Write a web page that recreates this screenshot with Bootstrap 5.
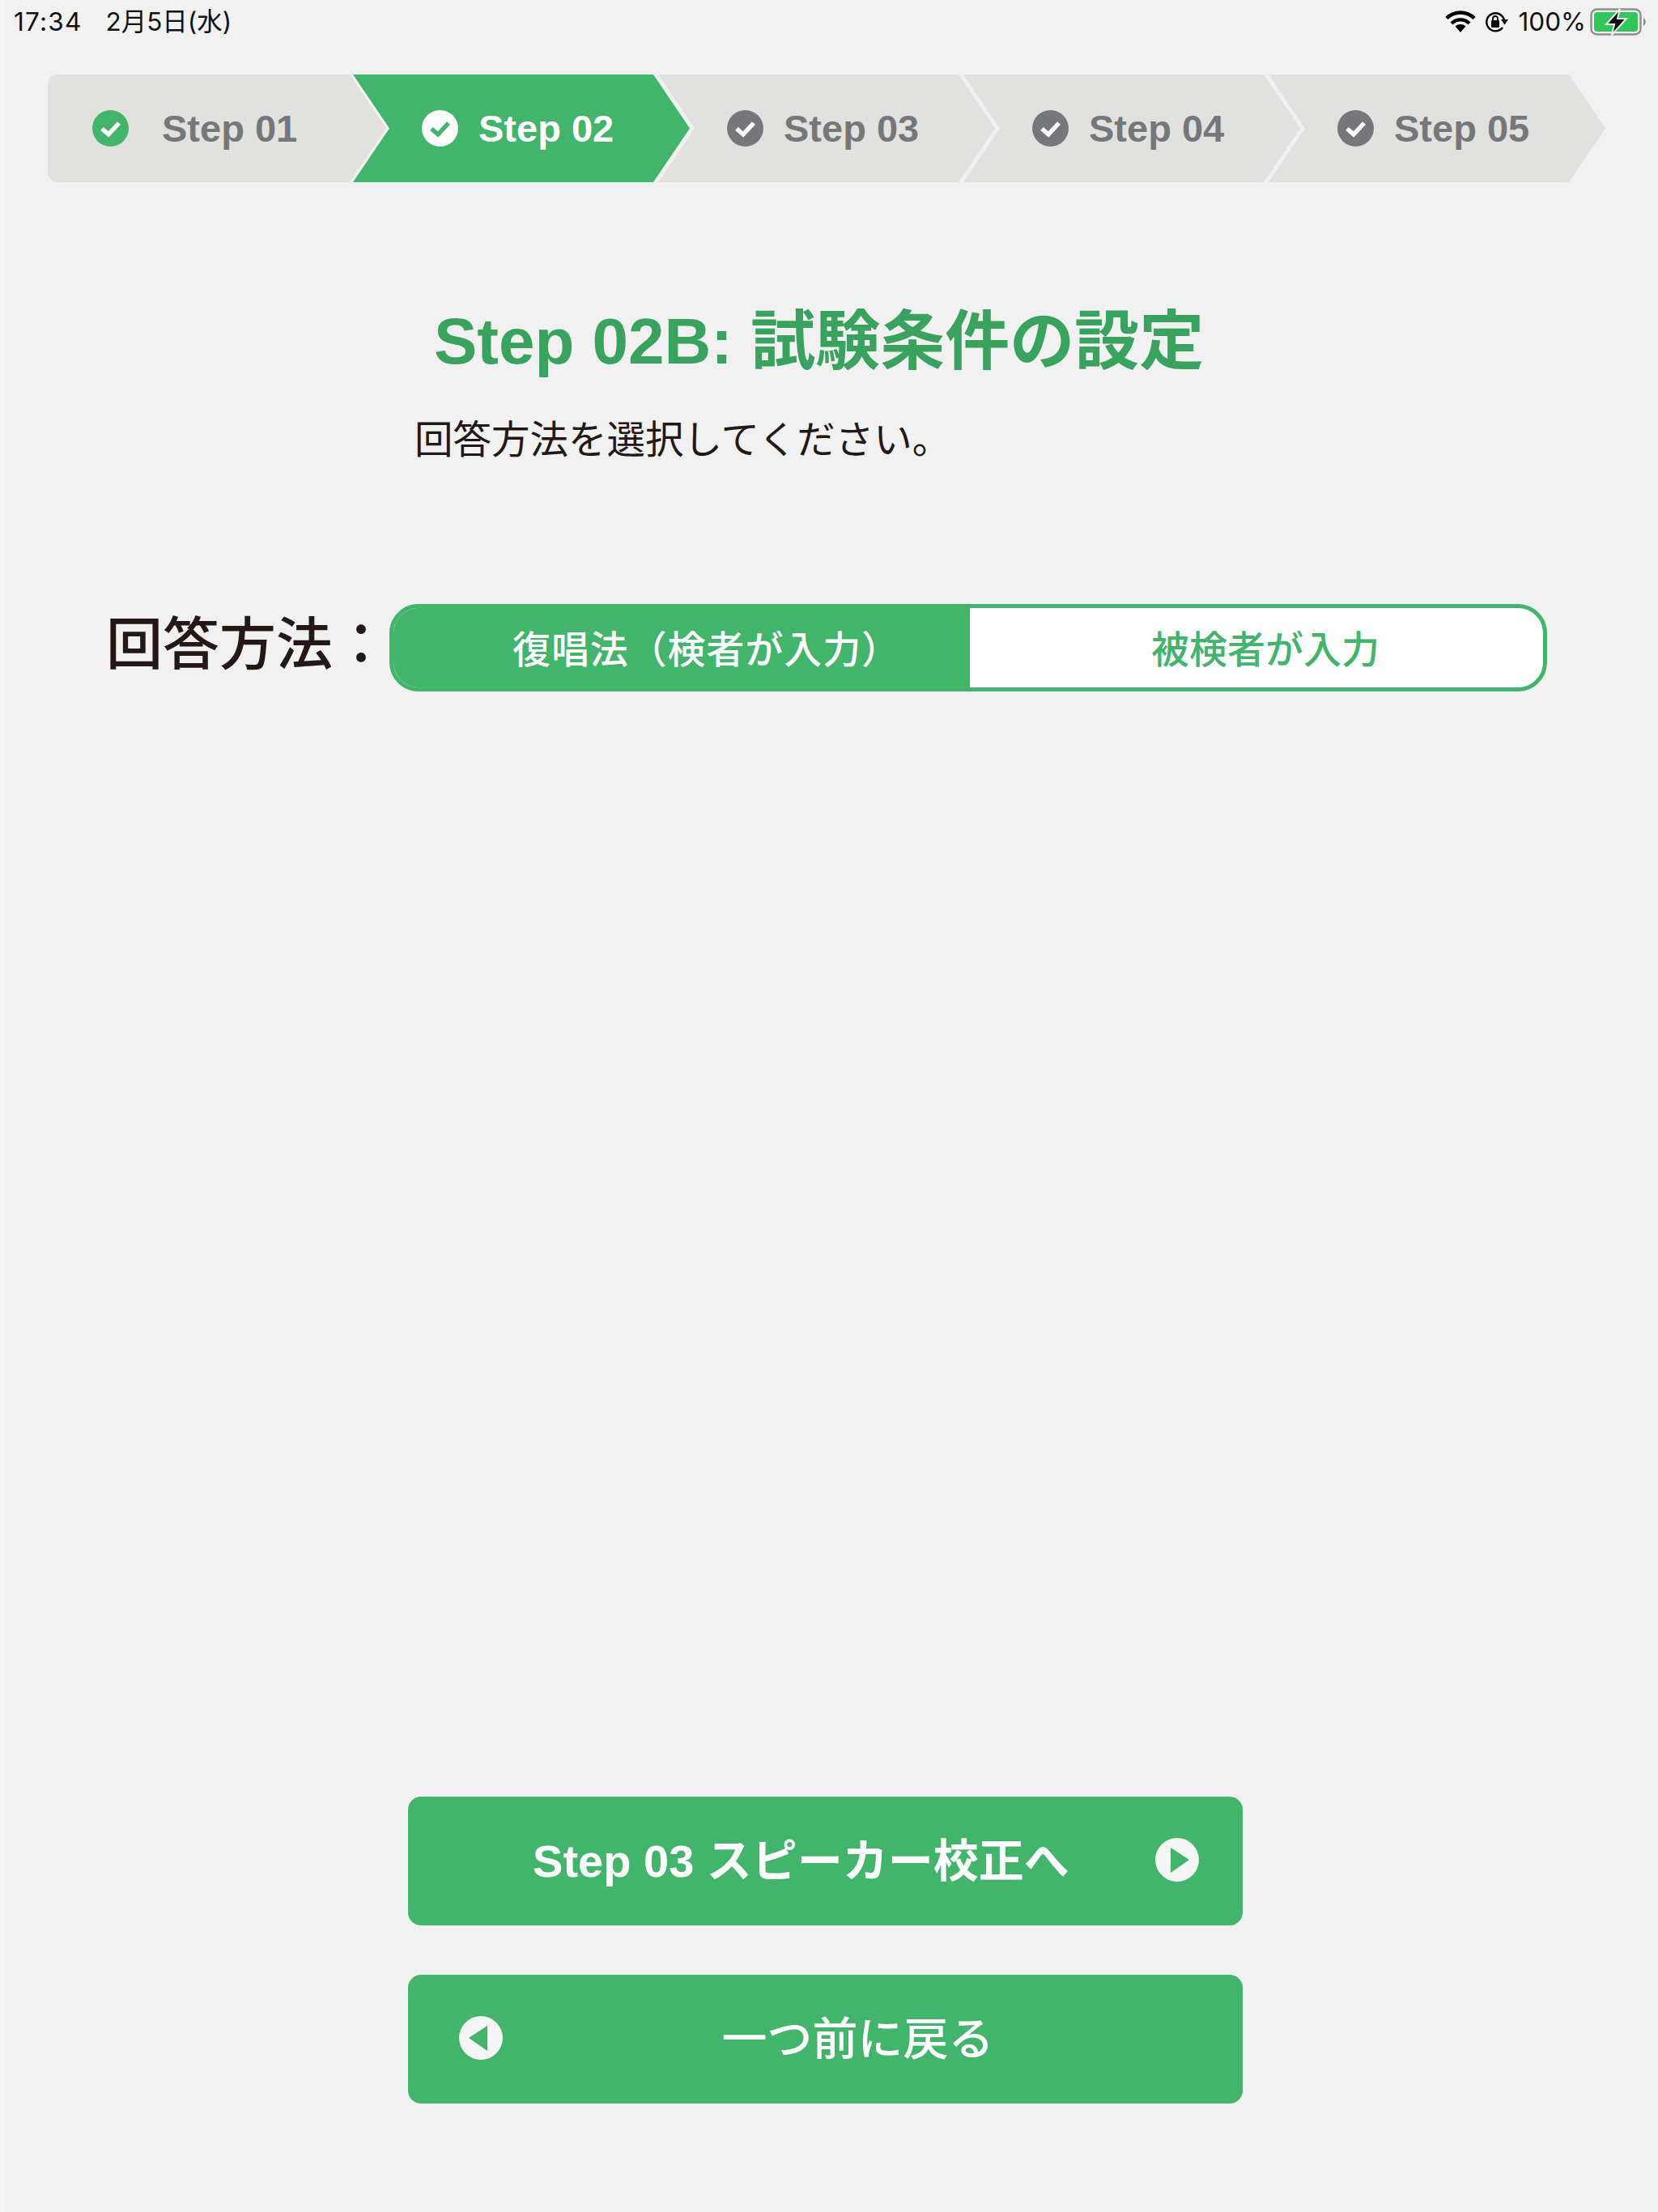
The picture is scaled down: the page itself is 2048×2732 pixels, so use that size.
<!DOCTYPE html>
<html lang="ja">
<head>
<meta charset="utf-8">
<title>Step 02B</title>
<link rel="stylesheet" href="https://cdn.jsdelivr.net/npm/bootstrap@5.3.0/dist/css/bootstrap.min.css">
<style>
:root{--grn:#42b46c;--grey:#e1e1df;--ink:#231815;--cjk:"Liberation Sans","Noto Sans CJK JP",sans-serif}
html,body{margin:0;background:#f1f1f1}
body{font-family:var(--cjk);color:var(--ink)}
.app-page{height:2732px;border-left:5px solid #f7f7f7;overflow:hidden}
.status-strip{height:54px;padding:0 14px 0 12px;font-family:"Inter","Noto Sans CJK JP",sans-serif;font-size:31.5px;color:#111;line-height:54px}
.status-time{letter-spacing:1.2px}
.status-date{margin-left:29px}
.status-lock{margin-left:11px}
.status-pct{margin:0 5px 0 12px}
.step-track{margin:38px 0 0 54px;height:133px}
.step-tab{width:416px;height:133px;margin-right:-39px;flex:none;background:var(--grey);color:#76777a;font-size:47px;font-weight:700;
 clip-path:polygon(0 0,371px 0,416px 50%,371px 100%,0 100%,45px 50%);padding-left:85px;gap:25px}
.step-tab span{padding-top:2px}
.step-tab.step-first{clip-path:polygon(0 0,373px 0,418px 50%,373px 100%,0 100%);width:418px;margin-right:-41px;padding-left:55px;gap:41px;border-radius:12px 0 0 12px}
.step-tab.step-on{background:var(--grn);color:#fff}
.step-ic{width:45px;height:45px;flex:none;display:block}
.page-title{font-size:80px;font-weight:700;color:#3aa25f;line-height:1;margin:157px 0 0 531px;white-space:nowrap}
.page-lead{font-size:47.5px;line-height:1;margin:58px 0 0 507px;white-space:nowrap}
.answer-row{margin:178px 0 0 126px;height:108px}
.answer-label{font-family:"Noto Sans CJK JP",sans-serif;font-size:70px;font-weight:500;width:350px;line-height:1;flex:none;padding-bottom:18px}
.seg-box{width:1430px;height:108px;border:5px solid var(--grn);border-radius:36px;overflow:hidden;background:#fff;font-family:"Noto Sans CJK JP",sans-serif;font-size:47px;font-weight:500}
.seg-on{width:712px;background:var(--grn);color:#fff;padding-left:147px;letter-spacing:.9px}
.seg-off{color:var(--grn);padding-left:22px}
.foot-stack{margin-top:auto;padding-bottom:134px;gap:61px;align-items:flex-start;margin-left:499px}
.foot-btn{width:1031px;height:159px;background:var(--grn);border:0;border-radius:16px;color:#fff;font-size:56px;font-weight:700;position:relative;padding:0}
.foot-btn:hover{background:var(--grn);color:#fff}
.foot-ic{width:54px;height:54px;position:absolute;top:51px}
.ic-next{right:54px}
.ic-prev{left:63px}
.foot-label{font-family:var(--cjk);white-space:nowrap}
.foot-back{font-family:"Noto Sans CJK JP",sans-serif;font-weight:500;font-size:56px;padding-left:80px;padding-bottom:5px}
.foot-next{padding-right:60px}
</style>
</head>
<body>
<div class="app-page d-flex flex-column">
  <div class="status-strip d-flex align-items-center">
    <span class="status-time">17:34</span><span class="status-date">2月5日(水)</span>
    <span class="ms-auto d-flex align-items-center">
      <svg width="38" height="28" viewBox="0 0 38 28"><g fill="none" stroke="#000" stroke-width="4.4"><path d="M2 9.5a24 24 0 0 1 34 0"/><path d="M8 16a15.5 15.5 0 0 1 22 0"/></g><path d="M12.6 19.5a9.5 9.5 0 0 1 12.8 0L19 27z"/></svg>
      <svg class="status-lock" width="30" height="26" viewBox="0 0 30 26"><path d="M24 11A11 11 0 1 0 22 20" fill="none" stroke="#000" stroke-width="2.4"/><path d="M20 10h9l-4.5 6.5z"/><rect x="8" y="11" width="10" height="9" rx="1.2"/><path d="M10 11.5V9a3 3 0 0 1 6 0v2.5" fill="none" stroke="#000" stroke-width="1.8"/></svg>
      <span class="status-pct">100%</span>
      <svg width="70" height="34" viewBox="0 0 70 34"><rect x="1.5" y="1.5" width="61" height="31" rx="7" fill="none" stroke="#8e8e8e" stroke-width="2.4"/><rect x="5" y="5" width="54" height="24" rx="4" fill="#30c75a"/><path d="M66 12a6 6 0 0 1 0 10z" fill="#8e8e8e"/><path d="M37 1L20 20h10l-3 13 18-20H34z" fill="#111" stroke="#f1f1f1" stroke-width="2"/></svg>
    </span>
  </div>

  <div class="step-track d-flex">
    <div class="step-tab step-first d-flex align-items-center">
      <svg class="step-ic" viewBox="0 0 45 45"><circle cx="22.5" cy="22.5" r="22.5" fill="#42b46c"/><path d="M12 23l8 7 13-14" fill="none" stroke="#fff" stroke-width="5.5"/></svg><span>Step 01</span>
    </div>
    <div class="step-tab step-on d-flex align-items-center">
      <svg class="step-ic" viewBox="0 0 45 45"><circle cx="22.5" cy="22.5" r="22.5" fill="#fff"/><path d="M12 23l8 7 13-14" fill="none" stroke="#42b46c" stroke-width="5.5"/></svg><span>Step 02</span>
    </div>
    <div class="step-tab d-flex align-items-center">
      <svg class="step-ic" viewBox="0 0 45 45"><circle cx="22.5" cy="22.5" r="22.5" fill="#76777a"/><path d="M12 23l8 7 13-14" fill="none" stroke="#fff" stroke-width="5.5"/></svg><span>Step 03</span>
    </div>
    <div class="step-tab d-flex align-items-center">
      <svg class="step-ic" viewBox="0 0 45 45"><circle cx="22.5" cy="22.5" r="22.5" fill="#76777a"/><path d="M12 23l8 7 13-14" fill="none" stroke="#fff" stroke-width="5.5"/></svg><span>Step 04</span>
    </div>
    <div class="step-tab d-flex align-items-center">
      <svg class="step-ic" viewBox="0 0 45 45"><circle cx="22.5" cy="22.5" r="22.5" fill="#76777a"/><path d="M12 23l8 7 13-14" fill="none" stroke="#fff" stroke-width="5.5"/></svg><span>Step 05</span>
    </div>
  </div>

  <h1 class="page-title">Step 02B: 試験条件の設定</h1>
  <p class="page-lead mb-0">回答方法を選択してください。</p>

  <div class="answer-row d-flex align-items-center">
    <div class="answer-label">回答方法：</div>
    <div class="seg-box d-flex">
      <div class="seg-on d-flex align-items-center">復唱法（検者が入力）</div>
      <div class="seg-off flex-grow-1 d-flex align-items-center justify-content-center">被検者が入力</div>
    </div>
  </div>

  <div class="foot-stack d-flex flex-column">
    <button type="button" class="btn foot-btn foot-next">
      <span class="foot-label">Step 03 スピーカー校正へ</span>
      <svg class="foot-ic ic-next" viewBox="0 0 54 54"><circle cx="27" cy="27" r="27" fill="#f3f6f4"/><path d="M18 12l23 15-23 16z" fill="#42b46c" transform="translate(1 0)"/></svg>
    </button>
    <button type="button" class="btn foot-btn foot-back">
      <svg class="foot-ic ic-prev" viewBox="0 0 54 54"><circle cx="27" cy="27" r="27" fill="#f3f6f4"/><path d="M36 12L13 27l23 16z" fill="#42b46c" transform="translate(-1 0)"/></svg>
      <span class="foot-label">一つ前に戻る</span>
    </button>
  </div>
</div>
<script src="https://cdn.jsdelivr.net/npm/bootstrap@5.3.0/dist/js/bootstrap.bundle.min.js"></script>
</body>
</html>
